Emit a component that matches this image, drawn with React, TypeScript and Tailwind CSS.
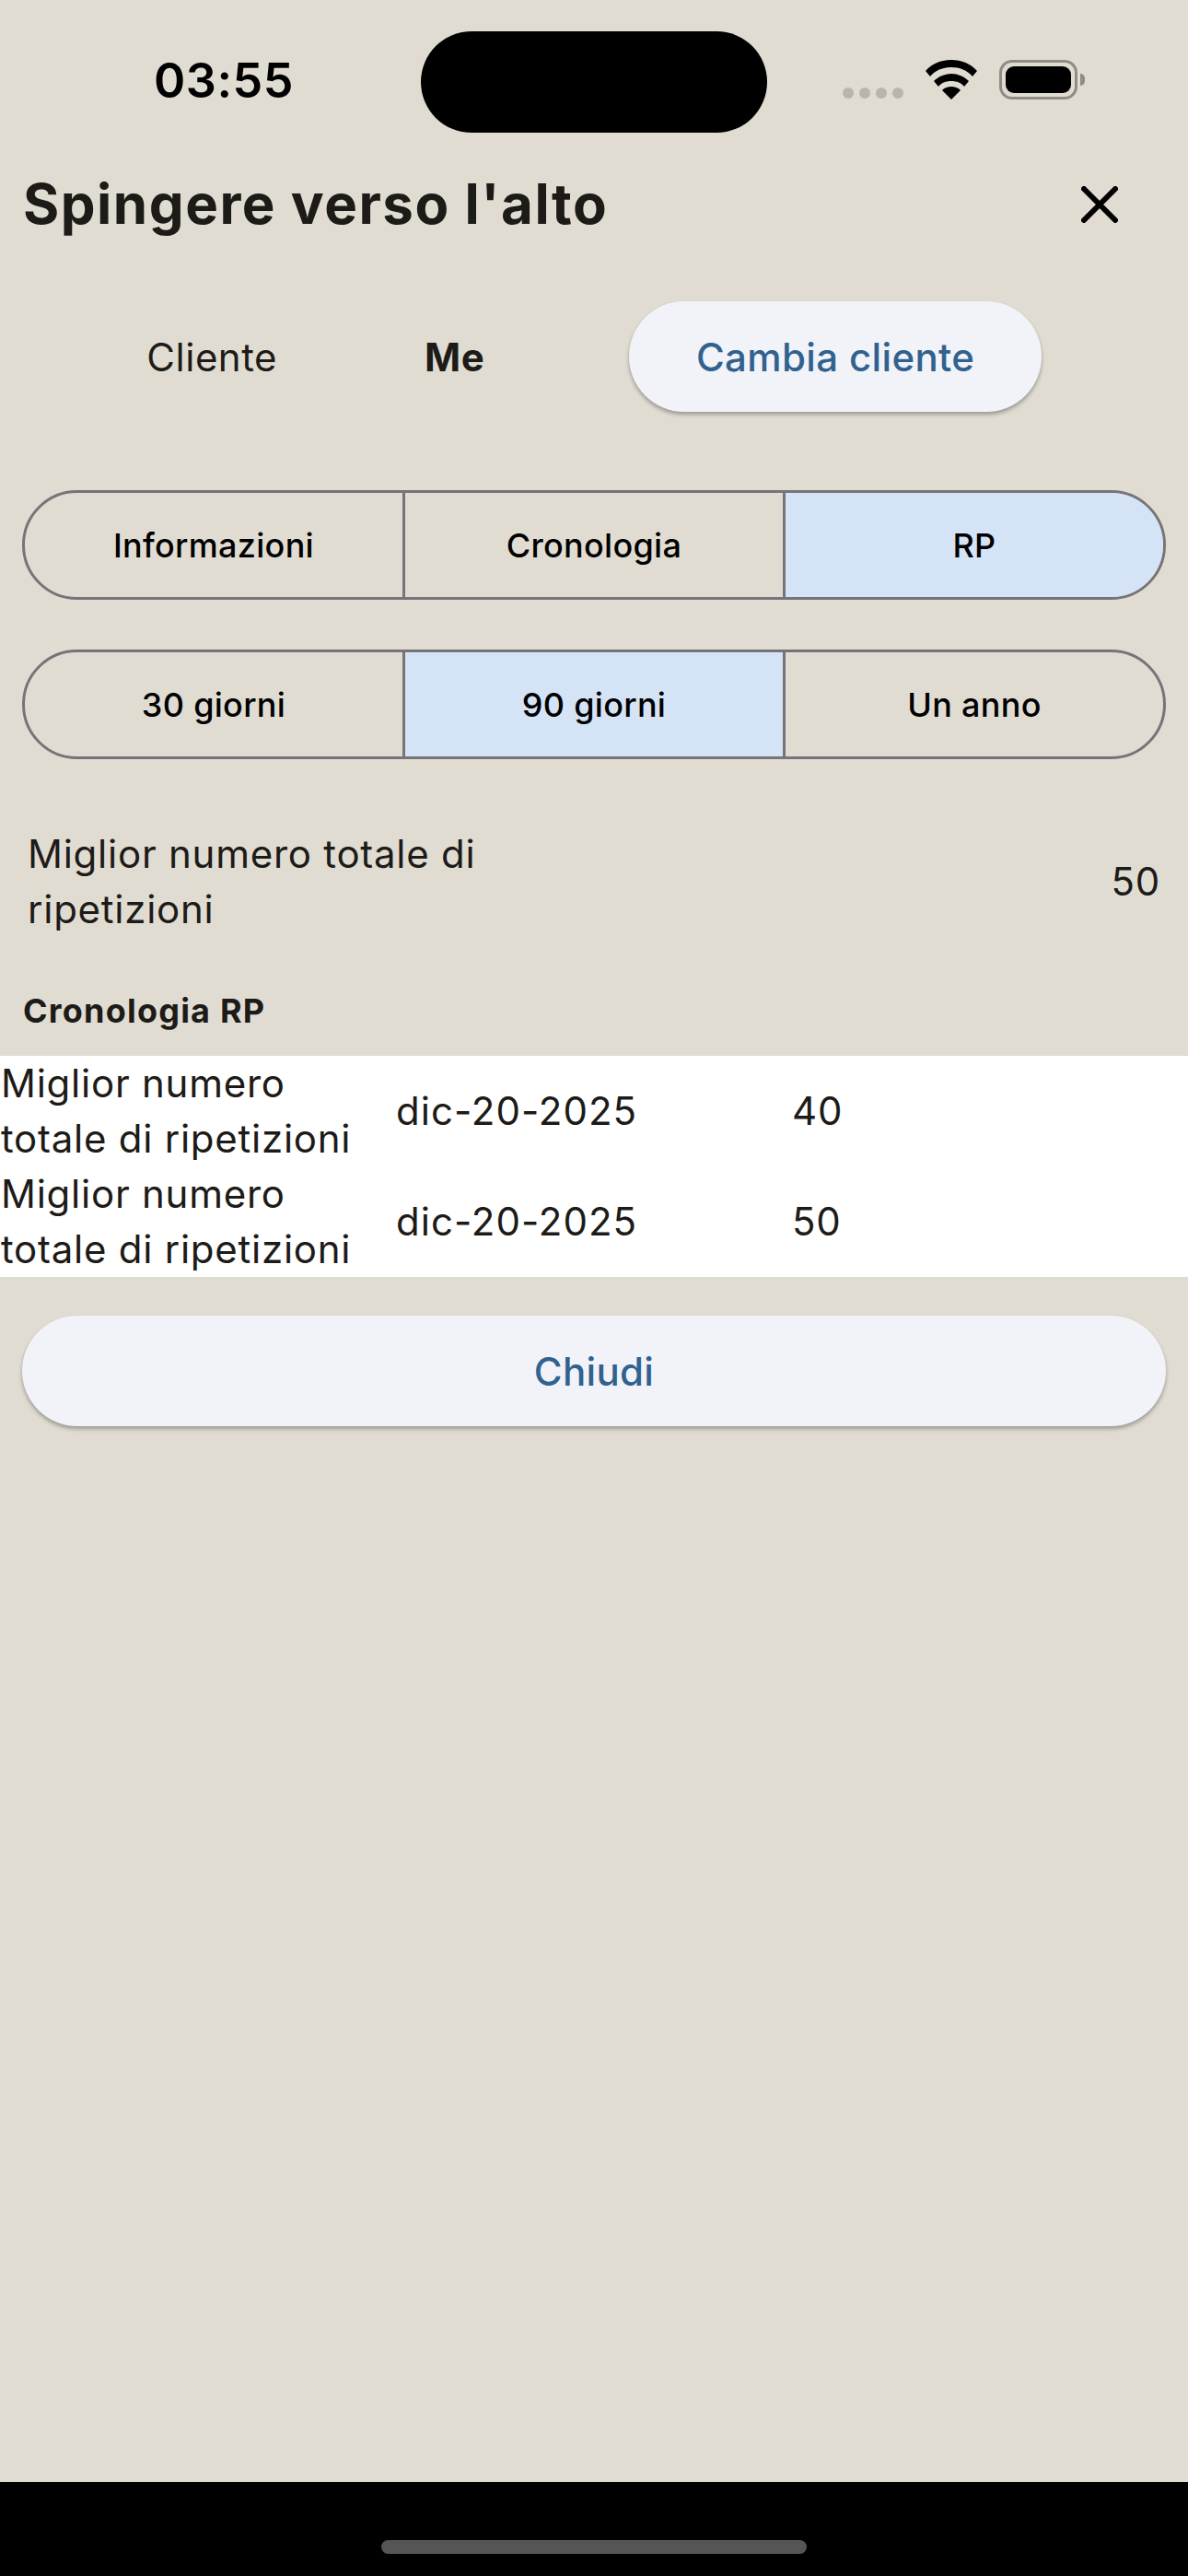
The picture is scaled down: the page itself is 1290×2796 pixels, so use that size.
const ink = 'text-[#1d1b18]'

function Wifi() {
  return (
    <svg width="58" height="43" viewBox="0 0 58 43" fill="#000">
      <path d="M29 0C18 0 8 4 1 12l5 6C12 11 20 8 29 8s17 3 23 10l5-6C50 4 40 0 29 0z" />
      <path d="M29 15c-7 0-14 3-19 8l5 6c3-4 8-6 14-6s11 2 14 6l5-6c-5-5-12-8-19-8z" />
      <path d="M29 29c-4 0-7 1-10 4l10 10 10-10c-3-3-6-4-10-4z" />
    </svg>
  )
}

function Battery() {
  return (
    <div className="flex items-center gap-[3px]">
      <div className="flex h-[43px] w-[85px] items-center justify-center rounded-[14px] border-[3px] border-[#8f8c85]">
        <div className="h-[29px] w-[71px] rounded-[9px] bg-black" />
      </div>
      <div className="h-[13px] w-[5px] rounded-r-full bg-[#8f8c85]" />
    </div>
  )
}

function StatusBar() {
  return (
    <div className="flex h-[144px] items-start pt-[34px]">
      <div className="flex w-[457px] justify-start pl-[167px] pt-[24px]">
        <span className="text-[52px] leading-[60px] font-semibold tracking-[0.5px] text-black">03:55</span>
      </div>
      <div className="h-[110px] w-[376px] rounded-[55px] bg-black" />
      <div className="flex items-end pl-[82px] pt-[31px]">
        <div className="mb-[1px] flex gap-[6px]">
          <div className="size-3 rounded-full bg-[#b9b5ab]" />
          <div className="size-3 rounded-full bg-[#b9b5ab]" />
          <div className="size-3 rounded-full bg-[#b9b5ab]" />
          <div className="size-3 rounded-full bg-[#b9b5ab]" />
        </div>
        <div className="ml-[23px]">
          <Wifi />
        </div>
        <div className="ml-[23px]">
          <Battery />
        </div>
      </div>
    </div>
  )
}

function Segmented({ items, active }: { items: string[]; active: number }) {
  return (
    <div className="mx-[24px] flex h-[119px] overflow-hidden rounded-[60px] border-[3px] border-[#777479]">
      {items.map((label, i) => (
        <div
          key={label}
          className={
            'flex flex-1 items-center justify-center pt-[1px] text-[36px] font-medium tracking-[0.3px] text-black ' +
            (i > 0 ? 'border-l-[3px] border-[#777479] ' : '') +
            (i === active ? 'bg-[#d4e3f6]' : '')
          }
        >
          {label}
        </div>
      ))}
    </div>
  )
}

function HistoryRow({ value }: { value: string }) {
  return (
    <div className={'grid h-[120px] grid-cols-3 items-center text-[42px] leading-[60px] tracking-[0.75px] ' + ink}>
      <div className="pl-[1px]">
        Miglior numero
        <br />
        totale di ripetizioni
      </div>
      <div className="tracking-[1px]">dic-20-2025</div>
      <div>{value}</div>
    </div>
  )
}

export default function App() {
  return (
    <div className="flex h-[2796px] flex-col bg-[#e0dcd2] font-['Inter',sans-serif]">
      <StatusBar />

      {/* Header */}
      <div className="mt-[37px] flex h-[80px] items-center justify-between pl-[25px] pr-[76px]">
        <h1 className={"text-[60px] font-bold tracking-[1.5px] " + ink}>Spingere verso l'alto</h1>
        <svg width="40" height="40" viewBox="0 0 40 40" stroke="#000" strokeWidth="6" strokeLinecap="round" className="mt-[2px]">
          <path d="M3 3l34 34M37 3L3 37" />
        </svg>
      </div>

      {/* Client switch */}
      <div className="mt-[66px] flex h-[120px] items-center">
        <div className={'w-[230px] text-right text-[42px] tracking-[0.5px] ' + ink}>
          <span className="inline-block translate-x-[71px]">Cliente</span>
        </div>
        <div className={'ml-[231px] text-[42px] font-bold tracking-[0.5px] ' + ink}>Me</div>
        <button className="ml-[157px] h-[120px] w-[448px] rounded-[60px] bg-[#f1f3f9] text-[42px] font-medium tracking-[0.35px] text-[#31628f] shadow-[0_3px_4px_rgba(0,0,0,0.3)]">
          Cambia cliente
        </button>
      </div>

      <div className="mt-[85px]">
        <Segmented items={['Informazioni', 'Cronologia', 'RP']} active={2} />
      </div>
      <div className="mt-[54px]">
        <Segmented items={['30 giorni', '90 giorni', 'Un anno']} active={1} />
      </div>

      {/* Best total */}
      <div className={'mt-[73px] flex items-center justify-between pl-[30px] pr-[30px] text-[42px] leading-[60px] tracking-[0.75px] ' + ink}>
        <div>
          Miglior numero totale di
          <br />
          ripetizioni
        </div>
        <div>50</div>
      </div>

      <div className={'mt-[55px] pl-[25px] text-[36px] leading-[50px] font-bold tracking-[1.2px] ' + ink}>Cronologia RP</div>

      {/* History table */}
      <div className="mt-[24px] bg-white">
        <HistoryRow value="40" />
        <HistoryRow value="50" />
      </div>

      <button className="mx-[24px] mt-[42px] h-[120px] rounded-[60px] bg-[#f1f3f9] text-[42px] font-medium tracking-[0.3px] text-[#31628f] shadow-[0_3px_4px_rgba(0,0,0,0.3)]">
        Chiudi
      </button>

      {/* Home indicator */}
      <div className="mt-auto flex h-[102px] justify-center bg-black pt-[63px]">
        <div className="h-[15px] w-[462px] rounded-full bg-[#555555]" />
      </div>
    </div>
  )
}
